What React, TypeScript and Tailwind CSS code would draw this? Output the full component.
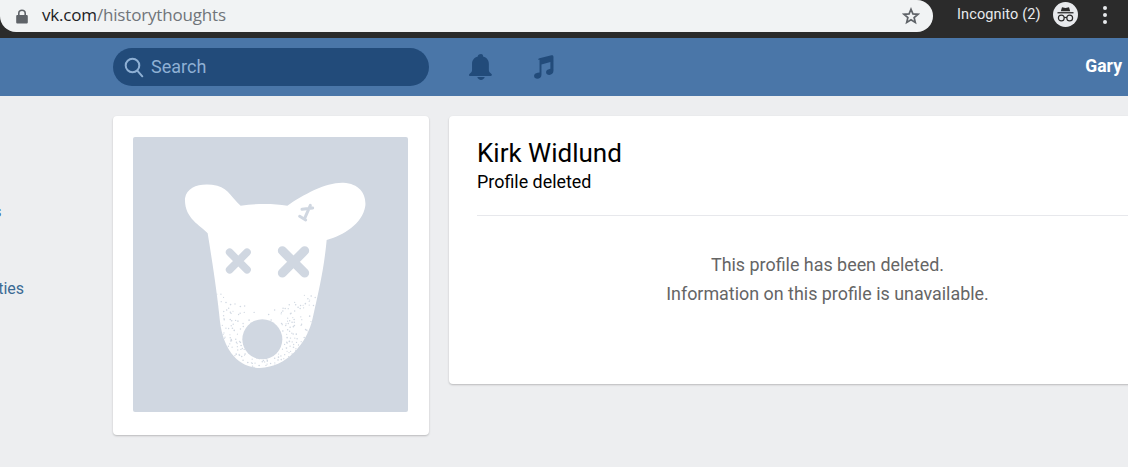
import React from 'react';

const FONT = "font-['Roboto',sans-serif]";

// seeded dots for the speckled chin of the dog
const makeDots = () => {
  const dots: { x: number; y: number; r: number }[] = [];
  let seed = 17;
  const rnd = () => {
    seed = (seed * 16807) % 2147483647;
    return seed / 2147483647;
  };
  for (let gy = 462; gy < 704; gy += 9) {
    for (let gx = 258; gx < 560; gx += 9) {
      const side = Math.abs(gx - 405) / 145;
      const start = 535 - side * 70;
      const depth = (gy - start) / 90;
      if (depth < 0) continue;
      const keep = Math.min(0.16 + depth * 0.34, 0.62);
      if (rnd() < keep) {
        dots.push({ x: gx + rnd() * 8, y: gy + rnd() * 8, r: 1.7 + rnd() * 0.8 });
      }
    }
  }
  return dots;
};

const HEAD =
  'M165 190 C172 152 215 143 262 152 C296 160 310 195 332 212 C380 205 430 205 472 212 C520 178 590 141 640 143 C690 146 709 178 706 212 C697 268 640 300 590 315 C582 400 568 460 548 550 C532 625 470 697 390 699 C320 697 280 640 270 560 C262 480 250 400 233 295 C210 270 162 250 165 190 Z';

const DeadDog = () => {
  const dots = makeDots();
  return (
    <svg viewBox="9 6 825 825" className="block w-full h-full">
      <defs>
        <clipPath id="head-clip">
          <path d={HEAD} />
        </clipPath>
      </defs>
      <path d={HEAD} fill="#ffffff" />
      <g clipPath="url(#head-clip)" fill="#c6cfdb" opacity="0.8">
        {dots.map((d, i) => (
          <circle key={i} cx={d.x} cy={d.y} r={d.r} />
        ))}
      </g>
      <circle cx="397" cy="613" r="60" fill="#d0d7e1" />
      <g stroke="#d0d7e1" strokeLinecap="round" fill="none">
        <path d="M299 352 L351 404 M351 352 L299 404" strokeWidth="23" />
        <path d="M457 347 L524 414 M524 347 L457 414" strokeWidth="27" />
        <path d="M541 211 L524 250 M516 223 L548 219 M509 244 L527 255" strokeWidth="9" />
      </g>
    </svg>
  );
};

const LockIcon = () => (
  <svg width="12" height="15" viewBox="0 0 12 15" fill="#5f6368">
    <path d="M2 6V4.2C2 2 3.7.6 6 .6s4 1.4 4 3.6V6h.4c.9 0 1.4.5 1.4 1.4v5.8c0 .9-.5 1.400-1.400 1.400H1.600C.7 14.600.2 14.100.2 13.200V7.400C.2 6.500.7 6 1.600 6H2zm1.600 0h4.800V4.200C8.400 2.900 7.400 2.100 6 2.100s-2.400.8-2.400 2.100V6z" />
  </svg>
);

const StarIcon = () => (
  <svg width="18" height="18" viewBox="0 0 18 18" fill="none" stroke="#5f6368" strokeWidth="1.7" strokeLinejoin="miter">
    <path d="M9 2.300 10.900 6.900 15.900 7.300 12.100 10.500 13.300 15.400 9 12.800 4.700 15.400 5.900 10.500 2.100 7.300 7.100 6.900Z" />
  </svg>
);

const IncognitoIcon = () => (
  <div className="w-[25px] h-[25px] rounded-full bg-[#e8eaed] flex items-center justify-center">
    <svg width="19" height="17" viewBox="0 0 19 17" fill="#2b2b2b">
      <path d="M6 1.200 9.500 2 13 1.200 14.200 5.300 4.800 5.300Z" />
      <rect x="1.500" y="6.100" width="16" height="1.300" />
      <circle cx="5.300" cy="12" r="2.900" fill="none" stroke="#2b2b2b" strokeWidth="1.200" />
      <circle cx="13.700" cy="12" r="2.900" fill="none" stroke="#2b2b2b" strokeWidth="1.200" />
      <path d="M8 11.500h3" stroke="#2b2b2b" strokeWidth="1.200" />
    </svg>
  </div>
);

const SearchIcon = () => (
  <svg width="20" height="21" viewBox="0 0 20 21" fill="none" stroke="#8fb0d4" strokeWidth="2">
    <circle cx="8.500" cy="8.500" r="6.800" />
    <path d="M13.300 13.700 18.300 19.300" strokeLinecap="round" />
  </svg>
);

const BellIcon = () => (
  <svg width="24" height="26" viewBox="0 0 22 26" fill="#224b7a" preserveAspectRatio="none">
    <path d="M11 0c1.100 0 1.900.8 1.900 1.900v.7C16.300 3.500 18.200 6.300 18.200 10v6.200c0 1.500 1 2.600 2.400 3.700.7.600.5 2-.7 2H1.100c-1.200 0-1.400-1.400-.7-2 1.400-1.100 2.400-2.200 2.400-3.700V10c0-3.700 1.900-6.500 5.300-7.400v-.7C8.100.8 9.900 0 11 0z" />
    <path d="M7.600 23h6.800c-.4 1.800-1.800 2.900-3.400 2.900s-3-1.100-3.400-2.900z" />
  </svg>
);

const MusicIcon = () => (
  <svg width="22" height="24" viewBox="0 0 22 25" fill="#224b7a">
    <path d="M6 5c0-.9.500-1.500 1.300-1.700L19.800.3C21 0 21.900.7 21.900 1.900v14.600c0 2.600-2 4.300-4.300 4.300-1.900 0-3.400-1-3.400-2.800 0-1.900 1.500-3 3.700-3.400l.8-.2V7.400l-9.300 2.500v10.600c0 2.600-2 4.300-4.300 4.300-1.900 0-3.400-1-3.400-2.800 0-1.900 1.500-3 3.700-3.400l2-.4V5z" />
  </svg>
);

const App: React.FC = () => {
  return (
    <div className={`w-[1128px] h-[467px] overflow-hidden bg-[#edeef0] ${FONT}`}>
      {/* browser chrome */}
      <div className="h-[38px] bg-[#2b2b2b] flex items-start">
        <div className="w-[933px] h-[32px] bg-[#f1f3f4] rounded-r-[16px] rounded-bl-[16px] flex items-center pl-[16px] pr-[13px]">
          <LockIcon />
          <div className="ml-[14px] mb-[2px] text-[17px] leading-[30px] text-[#70757a] font-['Open_Sans',sans-serif] tracking-[-0.18px] flex-1">
            <span className="text-[#202124]">vk.com</span>/historythoughts
          </div>
          <StarIcon />
        </div>
        <div className="flex-1 h-[29px] flex items-center pl-[24px]">
          <span className="text-[14.5px] leading-[29px] text-[#e8eaed] tracking-[0.12px] whitespace-nowrap">Incognito (2)</span>
          <div className="ml-[12px]">
            <IncognitoIcon />
          </div>
          <div className="ml-[25px] flex flex-col gap-[3px]">
            <span className="w-[4px] h-[4px] rounded-full bg-[#e8eaed]" />
            <span className="w-[4px] h-[4px] rounded-full bg-[#e8eaed]" />
            <span className="w-[4px] h-[4px] rounded-full bg-[#e8eaed]" />
          </div>
        </div>
      </div>

      {/* vk header */}
      <header className="h-[58px] bg-[#4a76a8] flex items-center pl-[113px]">
        <div className="w-[316px] h-[38px] rounded-[19px] bg-[#224b7a] flex items-center pl-[11px]">
          <SearchIcon />
          <span className="ml-[7px] text-[18px] leading-[36px] text-[#8fb0d4]">Search</span>
        </div>
        <div className="ml-[40px]">
          <BellIcon />
        </div>
        <div className="ml-[39px]">
          <MusicIcon />
        </div>
        <span className="ml-auto mr-[6px] text-[17.5px] leading-[24px] mb-[2px] font-bold text-white">Gary</span>
      </header>

      {/* page */}
      <div className="flex items-start pt-[20px]">
        <aside className="w-[113px] h-[200px] shrink-0 overflow-hidden text-[16px] text-[#3b6a94] whitespace-nowrap">
          <div className="ml-[-72px] mt-[84px] leading-[24px]">Messages</div>
          <div className="ml-[-71px] mt-[53px] leading-[24px]">Communities</div>
        </aside>

        <section className="w-[316px] h-[319px] shrink-0 bg-white rounded-[4px] shadow-[0_1px_2px_rgba(0,0,0,0.22)] p-[20px] pt-[21px]">
          <div className="w-[275px] h-[275px] bg-[#d0d7e1] rounded-[2px]">
            <DeadDog />
          </div>
        </section>

        <main className="ml-[20px] w-[757px] h-[268px] shrink-0 bg-white rounded-[4px] shadow-[0_1px_2px_rgba(0,0,0,0.22)] pl-[28px] pr-[28px]">
          <div className="pt-[21px] pb-[20px] border-b border-[#e7e8ec]">
            <h1 className="text-[26px] leading-[32px] text-black">Kirk Widlund</h1>
            <p className="text-[17.9px] leading-[26px] text-black">Profile deleted</p>
          </div>
          <div className="pt-[34px] text-center text-[17.9px] leading-[29px] text-[#656565]">
            <p>This profile has been deleted.</p>
            <p>Information on this profile is unavailable.</p>
          </div>
        </main>
      </div>
    </div>
  );
};

export default App;
